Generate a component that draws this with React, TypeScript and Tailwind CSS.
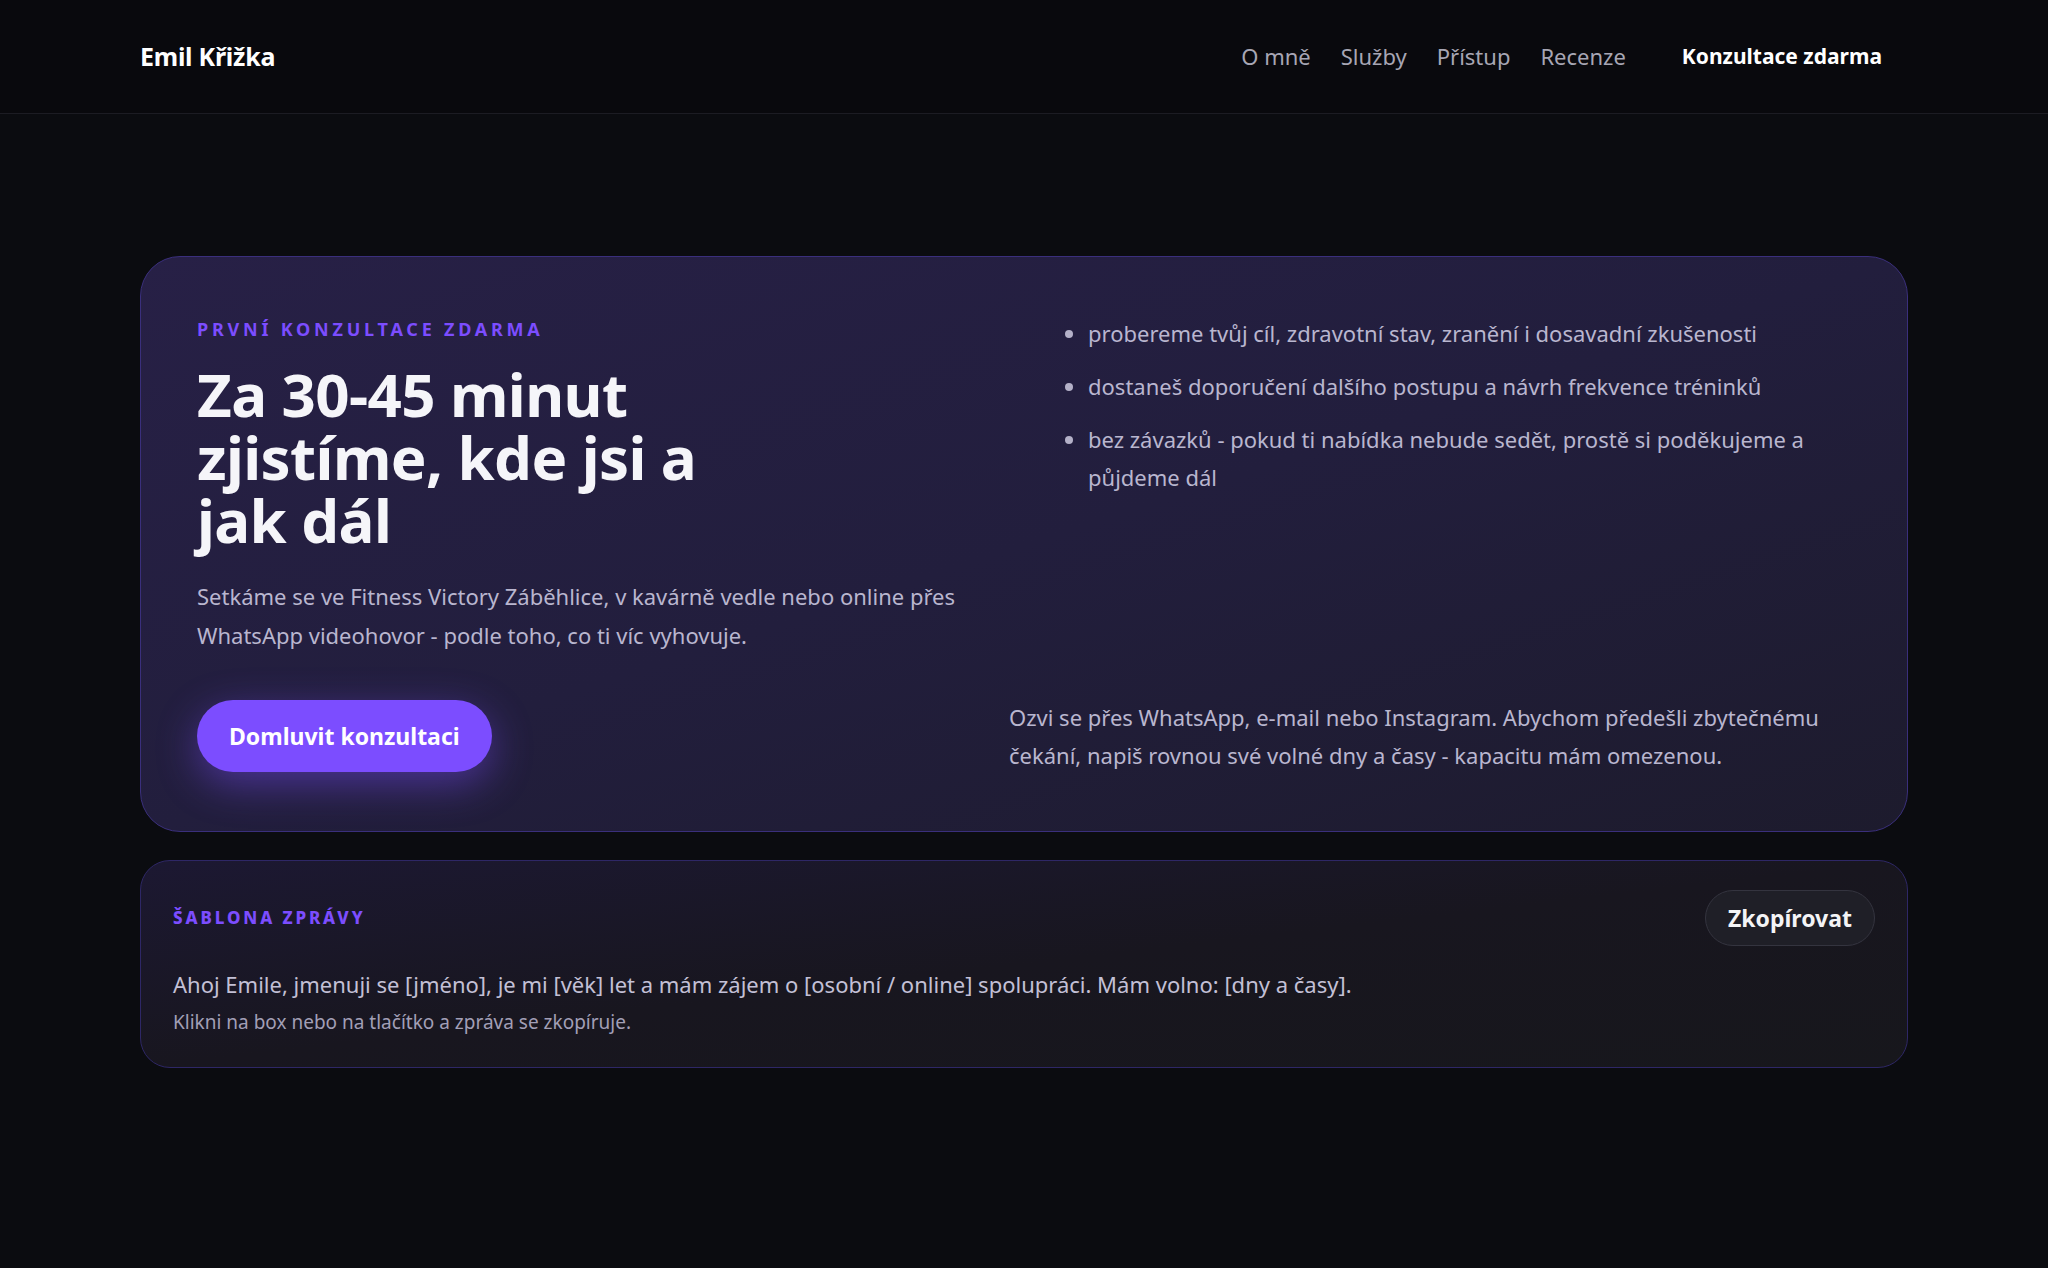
import React from "react";

const font = { fontFamily: '"Noto Sans", "Open Sans", sans-serif' };

function Header() {
  return (
    <header className="h-[114px] border-b border-[#1c1c23] bg-[#09090d]">
      <div className="mx-auto flex h-full max-w-[1768px] items-center justify-between">
        <a className="text-[25px] font-bold tracking-[-0.01em] text-white">Emil Křižka</a>
        <nav className="flex items-center gap-[30px] text-[22px] text-[#a7a6b4]">
          <a>O mně</a>
          <a>Služby</a>
          <a>Přístup</a>
          <a>Recenze</a>
          <a className="px-[26px] py-2 text-[21px] font-bold text-white">Konzultace zdarma</a>
        </nav>
      </div>
    </header>
  );
}

const points = [
  "probereme tvůj cíl, zdravotní stav, zranění i dosavadní zkušenosti",
  "dostaneš doporučení dalšího postupu a návrh frekvence tréninků",
  "bez závazků - pokud ti nabídka nebude sedět, prostě si poděkujeme a půjdeme dál",
];

function ConsultCard() {
  return (
    <section className="rounded-[40px] border border-[#3a2f7c] bg-gradient-to-br from-[#272046] via-[#221e3d] to-[#1d1b2d] px-14 pb-[57px] pt-[60px]">
      <div className="grid grid-cols-2 gap-12">
        <div>
          <p className="text-[18px] font-bold uppercase leading-6 tracking-[0.21em] text-[#7c4dff]">
            První konzultace zdarma
          </p>
          <h1 className="mt-[22px] max-w-[560px] text-[60px] font-bold leading-[63px] tracking-[-0.01em] text-[#f5f5f9]">
            Za 30-45 minut zjistíme, kde jsi a jak dál
          </h1>
          <p className="mt-[25px] text-[22px] leading-[39px] text-[#b9b6cf]">
            Setkáme se ve Fitness Victory Záběhlice, v kavárně vedle nebo online přes WhatsApp videohovor - podle toho, co ti víc vyhovuje.
          </p>
        </div>
        <ul className="-mt-[3px] flex list-disc flex-col gap-[15px] pl-10 text-[22px] leading-[38px] text-[#b9b6cf] marker:text-[#b4b1c8]">
          {points.map((p) => (
            <li key={p}>{p}</li>
          ))}
        </ul>
      </div>
      <div className="mt-[43px] flex items-center justify-between">
        <button className="h-[72px] rounded-full bg-[#7c4dff] px-8 text-[23px] font-bold text-white shadow-[0_12px_40px_rgba(124,77,255,0.45)]">
          Domluvit konzultaci
        </button>
        <p className="max-w-[842px] text-[22px] leading-[38px] text-[#b9b6cf]">
          Ozvi se přes WhatsApp, e-mail nebo Instagram. Abychom předešli zbytečnému čekání, napiš rovnou své volné dny a časy - kapacitu mám omezenou.
        </p>
      </div>
    </section>
  );
}

function TemplateCard() {
  return (
    <section className="mt-7 rounded-[30px] border border-[#2e2766] bg-gradient-to-br from-[#1c1832] via-[#18161f] to-[#17171c] px-8 pb-8 pt-[29px]">
      <div className="flex items-center justify-between">
        <p className="text-[17px] font-extrabold uppercase tracking-[0.17em] text-[#7c4dff]">Šablona zprávy</p>
        <button className="h-[56px] rounded-full border border-[#34343f] bg-[#1f1f27] px-[22px] text-[23px] font-bold text-[#f4f4f6]">
          Zkopírovat
        </button>
      </div>
      <p className="mt-[23px] text-[22px] leading-[30px] text-[#c3c0d6]">
        Ahoj Emile, jmenuji se [jméno], je mi [věk] let a mám zájem o [osobní / online] spolupráci. Mám volno: [dny a časy].
      </p>
      <p className="mt-[10px] text-[19px] leading-[26px] text-[#a29fb6]">
        Klikni na box nebo na tlačítko a zpráva se zkopíruje.
      </p>
    </section>
  );
}

export default function App() {
  return (
    <div className="min-h-[1268px] bg-[#0b0c10]" style={font}>
      <Header />
      <main className="mx-auto max-w-[1768px] pt-[142px]">
        <ConsultCard />
        <TemplateCard />
      </main>
    </div>
  );
}
